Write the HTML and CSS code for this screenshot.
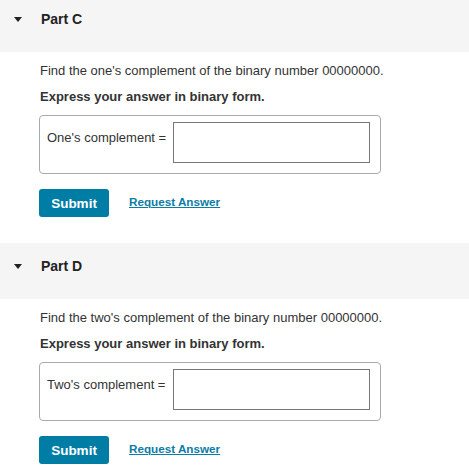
FILE: index.html
```html
<!DOCTYPE html>
<html lang="en">
<head>
    <meta charset="UTF-8">
    <meta name="viewport" content="width=device-width, initial-scale=1.0">
    <title>Parts C and D</title>
    <link rel="stylesheet" href="styles.css">
</head>
<body>
    <div class="part part-first">
        <div class="part-header">
            <span class="caret"></span>
            <span class="part-title">Part C</span>
        </div>
        <div class="part-body">
            <p class="question">Find the one's complement of the binary number 00000000.</p>
            <p class="instruction">Express your answer in binary form.</p>
            <div class="answer-box">
                <label class="answer-label" for="ans-c">One's complement =</label>
                <input class="answer-input" id="ans-c" type="text">
            </div>
            <div class="actions">
                <button class="btn-submit">Submit</button>
                <a class="request-link" href="#">Request Answer</a>
            </div>
        </div>
    </div>

    <div class="part">
        <div class="part-header">
            <span class="caret"></span>
            <span class="part-title">Part D</span>
        </div>
        <div class="part-body">
            <p class="question">Find the two's complement of the binary number 00000000.</p>
            <p class="instruction">Express your answer in binary form.</p>
            <div class="answer-box">
                <label class="answer-label" for="ans-d">Two's complement =</label>
                <input class="answer-input" id="ans-d" type="text">
            </div>
            <div class="actions">
                <button class="btn-submit">Submit</button>
                <a class="request-link" href="#">Request Answer</a>
            </div>
        </div>
    </div>
</body>
</html>
```

FILE: styles.css
```css
body {
    font-family: "Liberation Sans", Arial, Helvetica, sans-serif;
    background-color: #fff;
    margin: 0;
    color: #333;
    overflow: hidden;
}
.part-first {
    margin-top: -4px;
}
.part-header {
    height: 56px;
    box-sizing: border-box;
    background-color: #f5f5f5;
    display: flex;
    align-items: flex-start;
    padding-top: 15px;
}
.caret {
    width: 0;
    height: 0;
    border-left: 4px solid transparent;
    border-right: 4px solid transparent;
    border-top: 5px solid #222;
    margin: 6px 0 0 14px;
}
.part-title {
    margin-left: 19px;
    font-size: 14px;
    font-weight: 700;
    line-height: 16px;
    color: #222;
}
.part-body {
    padding: 11px 0 26px 39px;
}
.question {
    margin: 0;
    font-size: 13px;
    line-height: 16px;
    padding-left: 1px;
}
.instruction {
    margin: 10px 0 0 0;
    font-size: 13px;
    line-height: 16px;
    font-weight: 700;
    padding-left: 1px;
}
.answer-box {
    margin-top: 10px;
    width: 342px;
    box-sizing: border-box;
    border: 1px solid #aaa;
    border-radius: 4px;
    padding: 6px 10px 10px 7px;
    display: flex;
    align-items: flex-start;
}
.answer-label {
    font-size: 13px;
    line-height: 16px;
    margin-top: 8px;
    white-space: nowrap;
}
.answer-input {
    margin-left: auto;
    width: 197px;
    height: 41px;
    box-sizing: border-box;
    border: 1.5px solid #777;
    border-radius: 0;
    padding: 0 6px;
    font-size: 13px;
}
.actions {
    margin-top: 15px;
    display: flex;
    align-items: center;
}
.btn-submit {
    width: 70px;
    height: 28px;
    border: none;
    border-radius: 3px;
    background-color: #007da5;
    color: #fff;
    font-family: inherit;
    font-size: 13.5px;
    font-weight: 700;
    cursor: pointer;
}
.request-link {
    margin: 0 0 3px 20px;
    font-size: 11.7px;
    line-height: 14px;
    font-weight: 700;
    color: #0b7ca5;
    text-decoration: underline;
}
```
